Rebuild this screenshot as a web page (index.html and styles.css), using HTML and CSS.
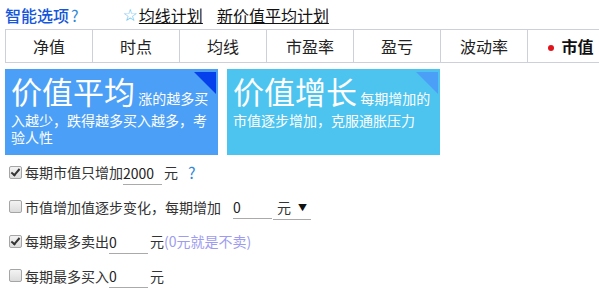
FILE: index.html
```html
<!DOCTYPE html>
<html lang="zh">
<head>
<meta charset="utf-8">
<link rel="stylesheet" href="styles.css">
</head>
<body>
<div class="page">
  <div class="header">
    <span class="title">智能选项<span class="q">?</span></span>
    <span class="links"><span class="star">☆</span><a class="lnk">均线计划</a><a class="lnk lnk2">新价值平均计划</a></span>
  </div>
  <div class="tabs">
    <div class="tab">净值</div>
    <div class="tab">时点</div>
    <div class="tab">均线</div>
    <div class="tab">市盈率</div>
    <div class="tab">盈亏</div>
    <div class="tab">波动率</div>
    <div class="tab active"><span class="dot"></span>市值</div>
  </div>
  <div class="cards">
    <div class="card card1">
      <span class="corner"></span>
      <p class="card-text"><span class="big">价值平均</span> 涨的越多买入越少，跌得越多买入越多，考验人性</p>
    </div>
    <div class="card card2">
      <span class="corner"></span>
      <p class="card-text"><span class="big">价值增长</span> 每期增加的市值逐步增加，克服通胀压力</p>
    </div>
  </div>
  <div class="options">
    <div class="row">
      <span class="cb checked"></span>
      <span class="lbl">每期市值只增加</span><span class="inp">2000</span><span class="unit">元</span><span class="help">?</span>
    </div>
    <div class="row">
      <span class="cb"></span>
      <span class="lbl">市值增加值逐步变化，每期增加</span><span class="inp inp-gap">0</span><span class="sel">元<span class="arrow">▼</span></span>
    </div>
    <div class="row">
      <span class="cb checked"></span>
      <span class="lbl">每期最多卖出</span><span class="inp">0</span><span class="unit">元</span><span class="note">(0元就是不卖)</span>
    </div>
    <div class="row">
      <span class="cb"></span>
      <span class="lbl">每期最多买入</span><span class="inp">0</span><span class="unit">元</span>
    </div>
  </div>
</div>
</body>
</html>
```

FILE: styles.css
```css
html, body {
  margin: 0;
  padding: 0;
  background: #fff;
  overflow: hidden;
}
body {
  font-family: "Noto Sans CJK SC", "Noto Sans", sans-serif;
  color: #222;
}
.page {
  padding-left: 5px;
  width: 700px;
}
.header {
  height: 29px;
  display: flex;
  align-items: center;
}
.title {
  font-size: 16px;
  font-weight: 500;
  color: #1456dc;
  line-height: 20px;
}
.title .q {
  color: #2f86d8;
  font-weight: 400;
  margin-left: 2px;
}
.links {
  margin-left: 44px;
  font-size: 16px;
  display: flex;
  align-items: center;
  line-height: 20px;
}
.star {
  color: #4fb9ee;
  font-size: 17px;
  font-family: "DejaVu Sans", sans-serif;
  margin-right: 1px;
}
.lnk {
  color: #111;
  text-decoration: underline;
}
.lnk2 {
  margin-left: 14px;
}
.tabs {
  display: flex;
  border-top: 1px solid #cdd0da;
  border-bottom: 1px solid #cdd0da;
  border-left: 1px solid #cdd0da;
  height: 32px;
}
.tab {
  flex: 0 0 86px;
  border-right: 1px solid #cdd0da;
  display: flex;
  align-items: center;
  justify-content: center;
  font-size: 16px;
  color: #222;
  background: #fff;
}
.tab.active {
  font-weight: bold;
  color: #111;
}
.dot {
  width: 6px;
  height: 6px;
  border-radius: 50%;
  background: #e0141a;
  margin-right: 7px;
  margin-top: 3px;
}
.cards {
  display: flex;
  gap: 9px;
  margin-top: 6px;
}
.card {
  position: relative;
  width: 213px;
  height: 86px;
  box-sizing: border-box;
  padding: 0 5px 0 6px;
  color: #fff;
}
.card1 { background: #4c9ff6; }
.card2 { background: #4cc4ef; }
.corner {
  position: absolute;
  top: 3px;
  right: 2px;
  width: 0;
  height: 0;
  border-top: 22px solid #0640ec;
  border-left: 22px solid transparent;
}
.card2 .corner { border-top-color: #4c9ff6; }
.card-text {
  margin: 0;
  font-size: 14px;
  line-height: 17px;
}
.big {
  font-size: 31px;
  line-height: 43px;
}
.options {
  margin-top: 0;
}
.row {
  height: 34.5px;
  display: flex;
  align-items: center;
  font-size: 14px;
  color: #333;
  padding-left: 4px;
}
.cb {
  width: 11px;
  height: 11px;
  border: 1px solid #a5a5a5;
  border-radius: 2px;
  background: linear-gradient(#f3f3f3, #dcdcdc);
  margin-right: 3px;
  position: relative;
}
.cb.checked::after {
  content: "";
  position: absolute;
  left: 3px;
  top: 0;
  width: 3px;
  height: 7px;
  border-right: 2px solid #333;
  border-bottom: 2px solid #333;
  transform: rotate(40deg);
}
.inp {
  width: 39px;
  border-bottom: 1px solid #aaa;
  line-height: 18px;
  padding-top: 4px;
  padding-bottom: 2px;
  color: #222;
}
.inp-gap {
  margin-left: 12px;
}
.unit {
  margin-left: 2px;
}
.help {
  color: #2f86d8;
  margin-left: 10px;
  font-size: 16px;
}
.sel {
  width: 34px;
  border-bottom: 1px solid #aaa;
  line-height: 18px;
  padding-top: 4px;
  padding-bottom: 2px;
  margin-left: 1px;
  padding-left: 4px;
}
.arrow {
  font-size: 9px;
  margin-left: 7px;
  vertical-align: 2px;
  color: #111;
}
.note {
  color: #9d9cf0;
}
```
